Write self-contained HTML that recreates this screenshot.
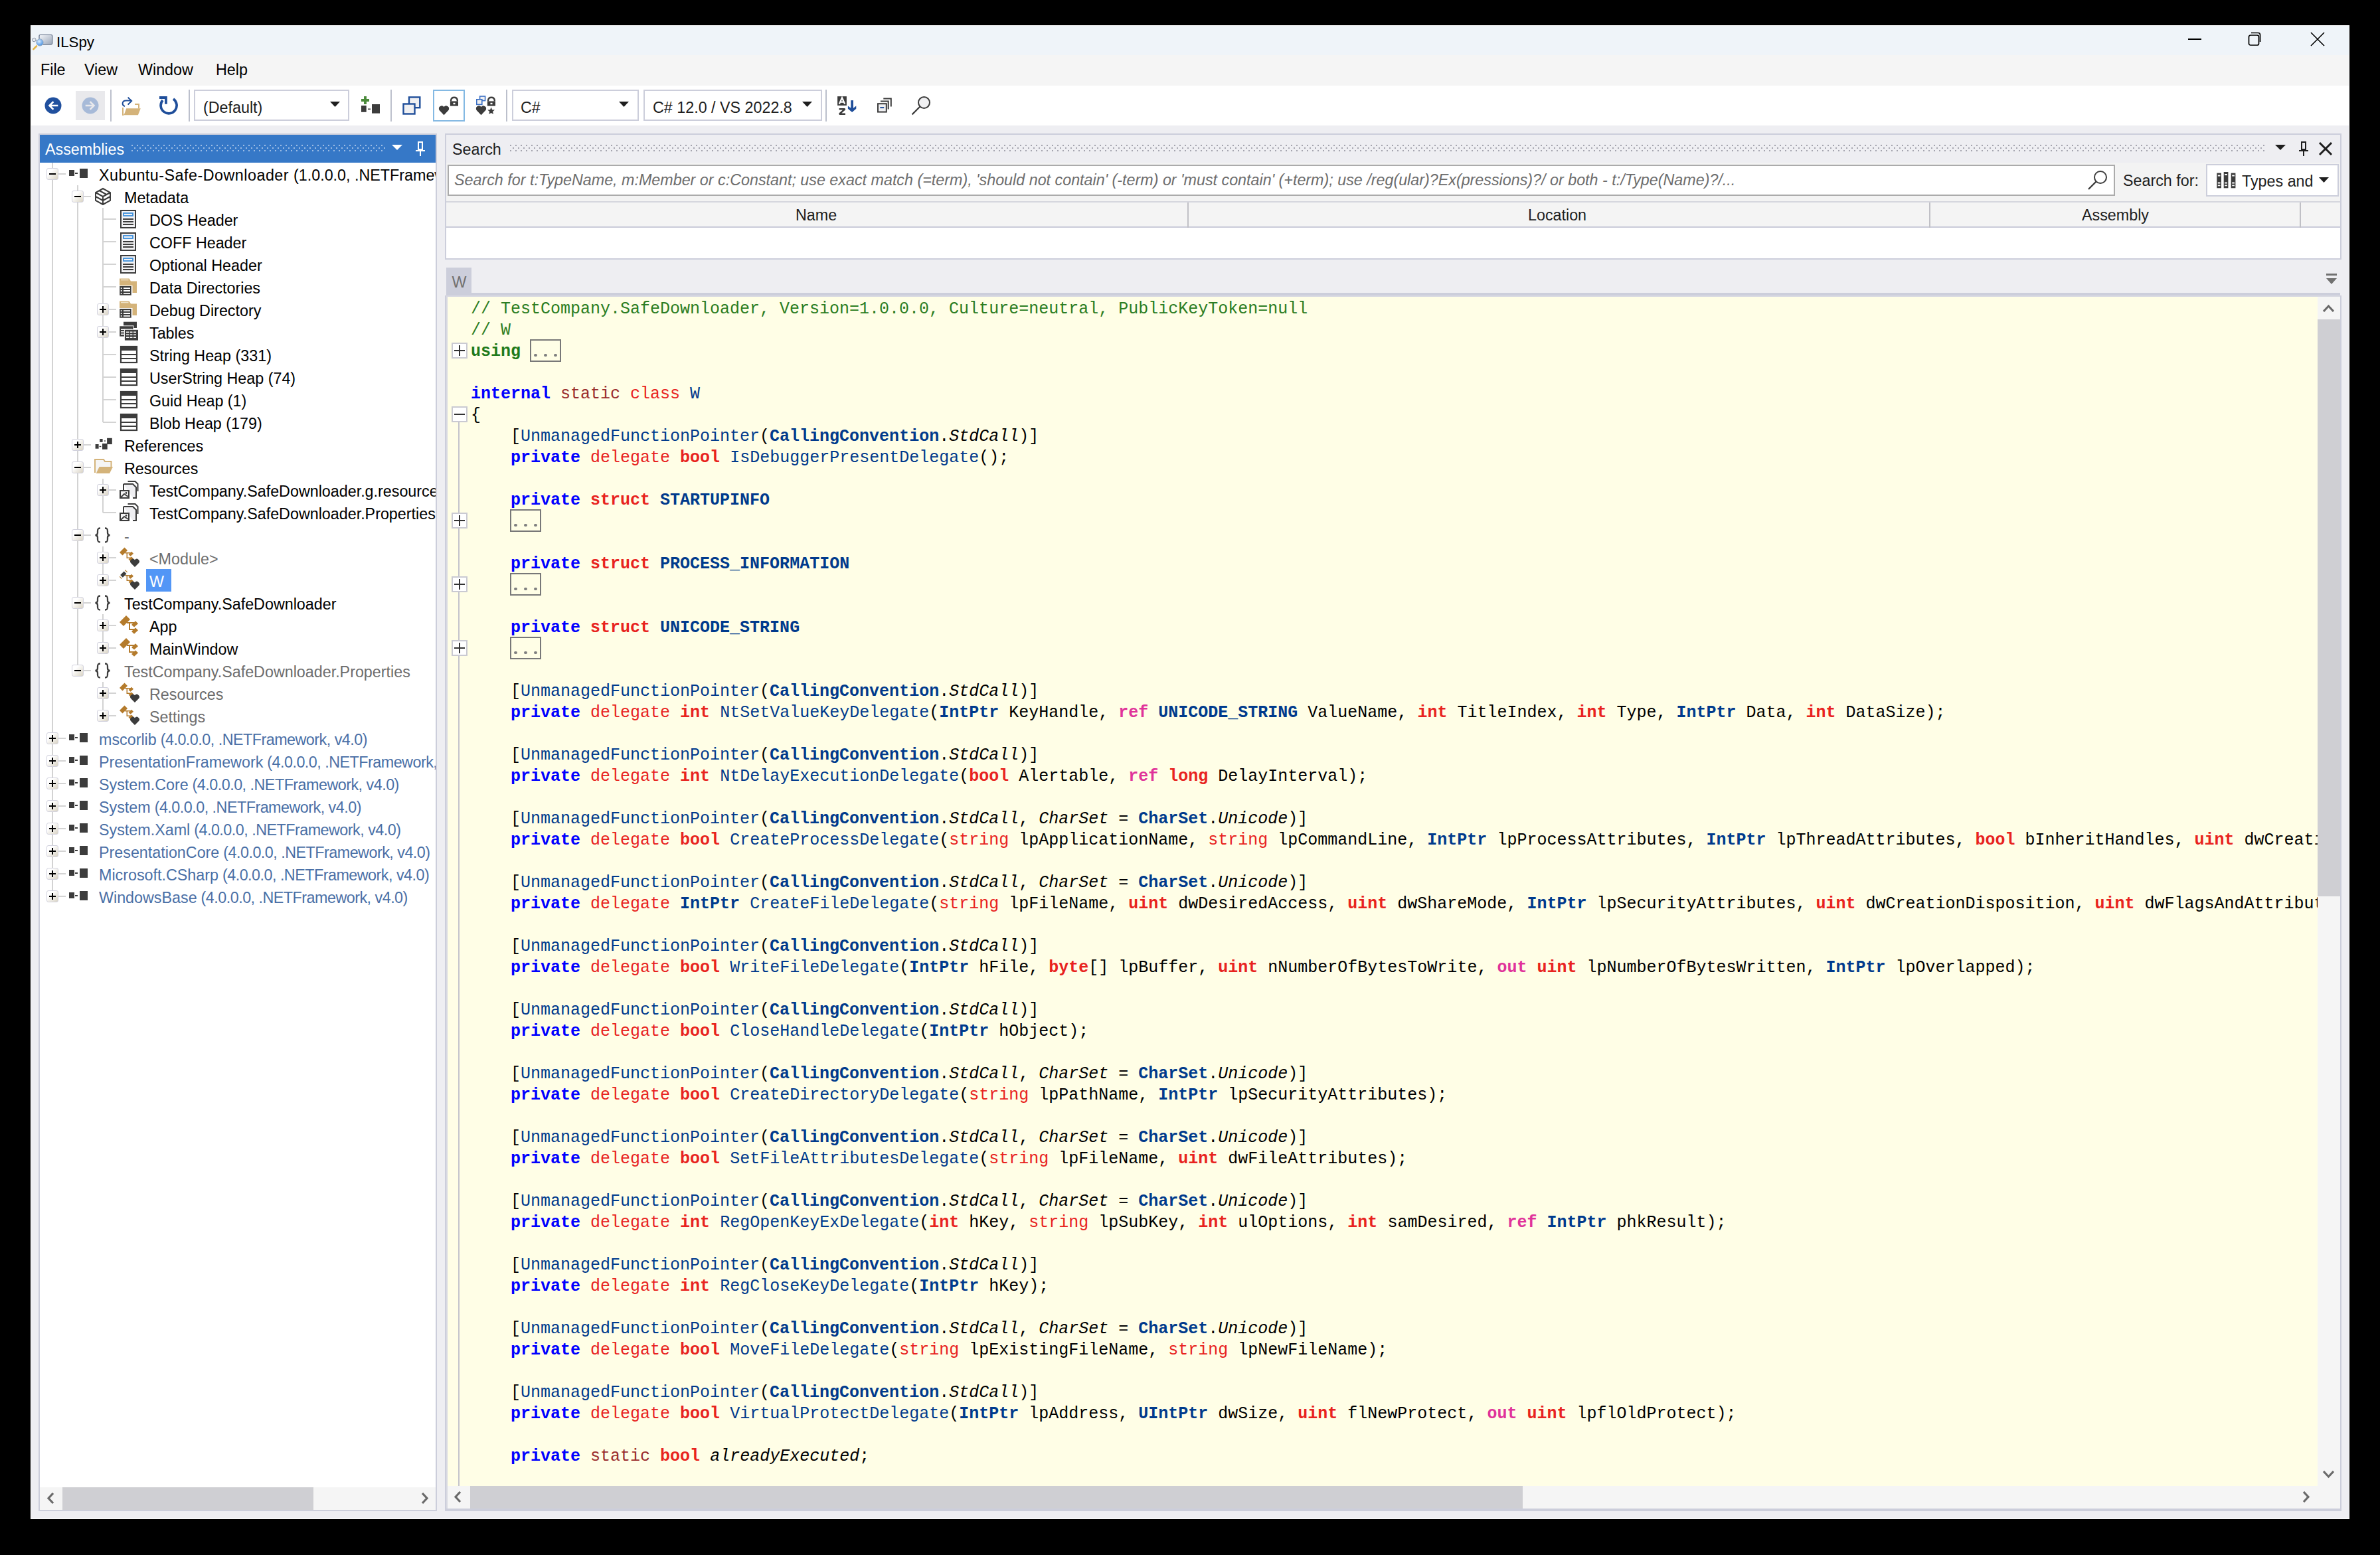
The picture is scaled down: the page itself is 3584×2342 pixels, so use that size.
<!DOCTYPE html><html><head><meta charset="utf-8"><style>
*{margin:0;padding:0;box-sizing:border-box}
html,body{width:3584px;height:2342px;overflow:hidden;background:#000}
.r{position:absolute}
.s{position:absolute;white-space:pre;font-family:"Liberation Sans",sans-serif}
.m{position:absolute;white-space:pre;font-family:"Liberation Mono",monospace}

.cd{position:absolute;left:708px;top:0;font-family:"Liberation Mono",monospace;font-size:25px;line-height:32px;white-space:pre;color:#000}
.c{color:#2B7D22}.ug{color:#1F7A1A;font-weight:bold}.ka{color:#0000FF;font-weight:bold}.mo{color:#9A2C2C}
.kt{color:#E8231E}.vt{color:#E8231E;font-weight:bold}.pm{color:#E0339A;font-weight:bold}.tr{color:#003A8C}.tv{color:#003A8C;font-weight:bold}.it{font-style:italic}
.el{display:inline-block;position:relative}
</style></head><body><div class="r" style="left:46px;top:38px;width:3492px;height:2250px;background:#EEEEF2;border:1px solid #F8F8FA"></div><div class="r" style="left:46px;top:38px;width:3492px;height:45px;background:#EFF4F9;"></div><div class="r" style="left:46px;top:83px;width:3492px;height:46px;background:#F5F5F5;"></div><div class="r" style="left:46px;top:129px;width:3492px;height:60px;background:#FFFFFF;"></div><svg class="r" style="left:46px;top:48px;" width="36" height="32" viewBox="0 0 36 32"><defs><linearGradient id="scr" x1="0" y1="0" x2="1" y2="1"><stop offset="0" stop-color="#F4F6FA"/><stop offset="1" stop-color="#9AA6B8"/></linearGradient><radialGradient id="mg" cx="0.4" cy="0.35" r="0.7"><stop offset="0" stop-color="#D8ECFF"/><stop offset="1" stop-color="#3D8AE0"/></radialGradient></defs><rect x="13" y="4.5" width="19.6" height="14.3" rx="1.5" fill="url(#scr)" stroke="#5A6880" stroke-width="1.2"/><circle cx="5.3" cy="12" r="2.8" fill="#E6EAF0" stroke="#8D98A8" stroke-width="1"/><path d="M8 12.5 L11 14" stroke="#8D98A8" stroke-width="1.2"/><circle cx="14" cy="15.9" r="5.2" fill="url(#mg)" stroke="#9AB0C8" stroke-width="1"/><path d="M4.4 26 L9 21.5" stroke="#E3B548" stroke-width="2.6" stroke-linecap="round"/></svg><div class="s" style="left:85px;top:47.77px;font-size:22.3px;line-height:31px;color:#000;">ILSpy</div><div class="r" style="left:3295px;top:58px;width:20px;height:2px;background:#000;"></div><svg class="r" style="left:3384px;top:47px;" width="26" height="26" viewBox="0 0 26 26"><rect x="2.5" y="6" width="15" height="15" rx="2.5" fill="none" stroke="#000" stroke-width="1.7"/><path d="M6 2.5 h10.5 a3 3 0 0 1 3 3 v10.5" fill="none" stroke="#000" stroke-width="1.7"/></svg><svg class="r" style="left:3477px;top:46px;" width="26" height="26" viewBox="0 0 26 26"><path d="M3 3 L23 23 M23 3 L3 23" stroke="#000" stroke-width="1.6"/></svg><div class="s" style="left:61px;top:89.42px;font-size:23.3px;line-height:33px;color:#000;">File</div><div class="s" style="left:127px;top:89.42px;font-size:23.3px;line-height:33px;color:#000;">View</div><div class="s" style="left:208px;top:89.42px;font-size:23.3px;line-height:33px;color:#000;">Window</div><div class="s" style="left:325px;top:89.42px;font-size:23.3px;line-height:33px;color:#000;">Help</div><div class="r" style="left:166px;top:135px;width:2px;height:48px;background:#BCC0CC;"></div><div class="r" style="left:284px;top:135px;width:2px;height:48px;background:#BCC0CC;"></div><div class="r" style="left:588px;top:135px;width:2px;height:48px;background:#BCC0CC;"></div><div class="r" style="left:762px;top:135px;width:2px;height:48px;background:#BCC0CC;"></div><div class="r" style="left:1243px;top:135px;width:2px;height:48px;background:#BCC0CC;"></div><svg class="r" style="left:66px;top:145px;" width="28" height="28" viewBox="0 0 28 28"><circle cx="14" cy="14" r="12.5" fill="#20509E"/><path d="M20 14 H9 M13.5 9 L8.5 14 L13.5 19" fill="none" stroke="#fff" stroke-width="2.6" stroke-linecap="square"/></svg><div class="r" style="left:114px;top:137px;width:44px;height:44px;background:#E9E9EC;"></div><svg class="r" style="left:122px;top:145px;" width="28" height="28" viewBox="0 0 28 28"><circle cx="14" cy="14" r="12.5" fill="#A7BAD8"/><path d="M8 14 H19 M14.5 9 L19.5 14 L14.5 19" fill="none" stroke="#E9E9EC" stroke-width="2.6" stroke-linecap="square"/></svg><svg class="r" style="left:182px;top:144px;" width="32" height="30" viewBox="0 0 32 30"><path d="M3 18 V29 h1.5" stroke="#D4B37A" stroke-width="2" fill="none"/><path d="M21 13 h6 v6.5" stroke="#D4B37A" stroke-width="2" fill="none"/><path d="M4.6 29.2 L8.3 19.3 H29.8 L25.9 29.2z" fill="#D4B37A"/><path d="M6 16.2 C1 14 1.5 7.6 8 7.6 H16" stroke="#1F4E9A" stroke-width="2" fill="none"/><path d="M10.6 2.6 L16.2 8 L10.6 13.6" stroke="#1F4E9A" stroke-width="2" fill="none"/></svg><svg class="r" style="left:238px;top:144px;" width="32" height="30" viewBox="0 0 32 30"><path d="M23 5 A12 12 0 1 1 7 7" fill="none" stroke="#1F4E9A" stroke-width="3.7"/><path d="M2 1 H13.8 V12.7 H10.1 V4.9 H2z" fill="#1F4E9A"/></svg><div class="r" style="left:292px;top:135px;width:234px;height:47px;background:#fff;border:2px solid #CCCEDB"></div><div class="s" style="left:306px;top:145.92px;font-size:23.3px;line-height:33px;color:#1E1E1E;">(Default)</div><svg class="r" style="left:497px;top:152px;" width="16" height="10" viewBox="0 0 16 10"><path d="M0 1 H15 L7.5 9z" fill="#1E1E1E"/></svg><svg class="r" style="left:542px;top:144px;" width="32" height="30" viewBox="0 0 32 30"><path d="M8 1 V13 M2 7 H14" stroke="#4A8A3A" stroke-width="3.9"/><rect x="2" y="15" width="7.7" height="9.8" fill="#3C3C3C"/><rect x="12" y="19.5" width="4" height="1.6" fill="#3C3C3C"/><rect x="18" y="13" width="12" height="13.7" fill="#3C3C3C"/></svg><svg class="r" style="left:604px;top:144px;" width="32" height="30" viewBox="0 0 32 30"><rect x="12" y="2.4" width="16.3" height="15.8" fill="#F0F0F2" stroke="#1F4E9A" stroke-width="2.4"/><rect x="3.5" y="12.5" width="17" height="15" fill="#F0F0F2" stroke="#1F4E9A" stroke-width="2.4"/></svg><div class="r" style="left:652px;top:135px;width:48px;height:48px;background:#fff;border:2px solid #84B9E3"></div><svg class="r" style="left:658px;top:142px;" width="36" height="34" viewBox="0 0 36 34"><path d="M10.5 31.2 L3.6 24 A4.1 4.1 0 0 1 10.5 19.2 A4.1 4.1 0 0 1 17.4 24z" fill="#3C3C3C"/><path d="M3.2 22.5 A4 4 0 0 1 10.5 19.5 A4 4 0 0 1 17.8 22.5 L10.5 31z" fill="#3C3C3C"/><rect x="19.9" y="10.4" width="12.1" height="7.2" fill="#3C3C3C"/><path d="M21.1 10.4 V9 A4.9 4.9 0 0 1 30.8 9 V10.4" fill="none" stroke="#3C3C3C" stroke-width="2.4"/><rect x="24.5" y="12.8" width="3" height="2.4" fill="#fff"/></svg><svg class="r" style="left:714px;top:142px;" width="36" height="34" viewBox="0 0 36 34"><rect x="8.6" y="3" width="8" height="6.6" fill="#F0F0F2" stroke="#3A6FC4" stroke-width="1.6"/><rect x="3.8" y="7.8" width="8" height="7.6" fill="#F0F0F2" stroke="#3A6FC4" stroke-width="1.6"/><path d="M10.5 31.2 L3.6 24 A4.1 4.1 0 0 1 10.5 19.2 A4.1 4.1 0 0 1 17.4 24z" fill="#3C3C3C"/><path d="M3.2 22.5 A4 4 0 0 1 10.5 19.5 A4 4 0 0 1 17.8 22.5 L10.5 31z" fill="#3C3C3C"/><rect x="19.9" y="10.4" width="12.1" height="7.2" fill="#3C3C3C"/><path d="M21.1 10.4 V9 A4.9 4.9 0 0 1 30.8 9 V10.4" fill="none" stroke="#3C3C3C" stroke-width="2.4"/><rect x="24.5" y="12.8" width="3" height="2.4" fill="#fff"/><path d="M25.6 19.6 l1.5 3.7 3.9 .3 -3 2.5 1 3.9 -3.4 -2.1 -3.4 2.1 1 -3.9 -3 -2.5 3.9 -.3z" fill="#3C3C3C"/></svg><div class="r" style="left:771px;top:135px;width:191px;height:47px;background:#fff;border:2px solid #CCCEDB"></div><div class="s" style="left:784px;top:145.92px;font-size:23.3px;line-height:33px;color:#1E1E1E;">C#</div><svg class="r" style="left:932px;top:152px;" width="16" height="10" viewBox="0 0 16 10"><path d="M0 1 H15 L7.5 9z" fill="#1E1E1E"/></svg><div class="r" style="left:969px;top:135px;width:269px;height:47px;background:#fff;border:2px solid #CCCEDB"></div><div class="s" style="left:983px;top:145.92px;font-size:23.3px;line-height:33px;color:#1E1E1E;">C# 12.0 / VS 2022.8</div><svg class="r" style="left:1208px;top:152px;" width="16" height="10" viewBox="0 0 16 10"><path d="M0 1 H15 L7.5 9z" fill="#1E1E1E"/></svg><svg class="r" style="left:1258px;top:143px;" width="36" height="32" viewBox="0 0 36 32"><rect x="3.1" y="2.1" width="13.8" height="13.8" fill="#3C3C3C"/><path d="M5.8 13.6 L10 4.3 L14.2 13.6 M7.4 10.6 H12.6" fill="none" stroke="#fff" stroke-width="2.3"/><path d="M5.6 21.2 H14.4 L6 28.8 H15" fill="none" stroke="#3C3C3C" stroke-width="2.6" stroke-linejoin="bevel"/><rect x="23.3" y="8.1" width="3.7" height="11" fill="#1F4E9A"/><path d="M18.9 16.6 L25.15 21.3 L31.3 16.6 V20.8 L25.15 26.1 L18.9 20.8z" fill="#1F4E9A"/><path d="M23.3 18 h3.7 v4 h-3.7z" fill="#1F4E9A"/></svg><svg class="r" style="left:1318px;top:143px;" width="28" height="32" viewBox="0 0 28 32"><path d="M12.3 5.4 H23.8 V17.5" fill="none" stroke="#3C3C3C" stroke-width="2"/><path d="M8 9.5 H19.7 V21.6" fill="none" stroke="#3C3C3C" stroke-width="2"/><rect x="4" y="13.2" width="12.8" height="12.4" fill="#F0F0F2" stroke="#3C3C3C" stroke-width="2"/><path d="M7.3 19.1 H13.2" stroke="#1F4E9A" stroke-width="2"/></svg><svg class="r" style="left:1370px;top:143px;" width="34" height="34" viewBox="0 0 34 34"><circle cx="21.5" cy="11.5" r="8.5" fill="#F0F0F2" stroke="#3C3C3C" stroke-width="2"/><path d="M15.2 17.8 L3.6 29.4" stroke="#3C3C3C" stroke-width="2.2"/></svg><div class="r" style="left:58px;top:201px;width:600px;height:2075px;background:#fff;border:2px solid #CCCEDB"></div><div class="r" style="left:60px;top:203px;width:596px;height:42px;background:#3678C7;"></div><div class="s" style="left:68px;top:209.42px;font-size:23.3px;line-height:33px;color:#fff;">Assemblies</div><svg class="r" style="left:198px;top:218px;" width="382" height="10" viewBox="0 0 382 10"><defs><pattern id="g198" width="8" height="8" patternUnits="userSpaceOnUse"><rect x="0" y="0" width="2" height="2" fill="#9DBDE5"/><rect x="4" y="4" width="2" height="2" fill="#9DBDE5"/></pattern></defs><rect width="382" height="10" fill="url(#g198)"/></svg><svg class="r" style="left:590px;top:218px;" width="18" height="10" viewBox="0 0 18 10"><path d="M0 0 H16 L8 8z" fill="#fff"/></svg><svg class="r" style="left:624px;top:212px;" width="18" height="24" viewBox="0 0 18 24"><path d="M5 1 H13 V14 H5z M7 3 V12 H11 V3z" fill="#fff" fill-rule="evenodd"/><rect x="2" y="14" width="14" height="2" fill="#fff"/><rect x="8" y="16" width="2" height="7" fill="#fff"/></svg><div class="r" style="left:60px;top:2240px;width:596px;height:34px;background:#F5F5F5;"></div><div class="r" style="left:94px;top:2240px;width:378px;height:34px;background:#CFCFD3;"></div><svg class="r" style="left:70px;top:2248px;" width="14" height="18" viewBox="0 0 14 18"><path d="M10 1 L3 8.5 L10 16" fill="none" stroke="#6A6A6A" stroke-width="3.2"/></svg><svg class="r" style="left:632px;top:2248px;" width="14" height="18" viewBox="0 0 14 18"><path d="M4 1 L11 8.5 L4 16" fill="none" stroke="#6A6A6A" stroke-width="3.2"/></svg><div class="r" style="left:60px;top:245px;width:596px;height:1995px;overflow:hidden"><div class="r" style="left:18px;top:0px;width:2px;height:1105px;background:#D3D3D3;"></div><div class="r" style="left:56px;top:34px;width:2px;height:731px;background:#D3D3D3;"></div><div class="r" style="left:94px;top:68px;width:2px;height:323px;background:#D3D3D3;"></div><div class="r" style="left:94px;top:476px;width:2px;height:51px;background:#D3D3D3;"></div><div class="r" style="left:94px;top:578px;width:2px;height:51px;background:#D3D3D3;"></div><div class="r" style="left:94px;top:680px;width:2px;height:51px;background:#D3D3D3;"></div><div class="r" style="left:94px;top:782px;width:2px;height:51px;background:#D3D3D3;"></div><div class="r" style="left:19px;top:16px;width:20px;height:2px;background:#D3D3D3;"></div><div class="r" style="left:57px;top:50px;width:20px;height:2px;background:#D3D3D3;"></div><div class="r" style="left:95px;top:84px;width:20px;height:2px;background:#D3D3D3;"></div><div class="r" style="left:95px;top:118px;width:20px;height:2px;background:#D3D3D3;"></div><div class="r" style="left:95px;top:152px;width:20px;height:2px;background:#D3D3D3;"></div><div class="r" style="left:95px;top:186px;width:20px;height:2px;background:#D3D3D3;"></div><div class="r" style="left:95px;top:220px;width:20px;height:2px;background:#D3D3D3;"></div><div class="r" style="left:95px;top:254px;width:20px;height:2px;background:#D3D3D3;"></div><div class="r" style="left:95px;top:288px;width:20px;height:2px;background:#D3D3D3;"></div><div class="r" style="left:95px;top:322px;width:20px;height:2px;background:#D3D3D3;"></div><div class="r" style="left:95px;top:356px;width:20px;height:2px;background:#D3D3D3;"></div><div class="r" style="left:95px;top:390px;width:20px;height:2px;background:#D3D3D3;"></div><div class="r" style="left:57px;top:424px;width:20px;height:2px;background:#D3D3D3;"></div><div class="r" style="left:57px;top:458px;width:20px;height:2px;background:#D3D3D3;"></div><div class="r" style="left:95px;top:492px;width:20px;height:2px;background:#D3D3D3;"></div><div class="r" style="left:95px;top:526px;width:20px;height:2px;background:#D3D3D3;"></div><div class="r" style="left:57px;top:560px;width:20px;height:2px;background:#D3D3D3;"></div><div class="r" style="left:95px;top:594px;width:20px;height:2px;background:#D3D3D3;"></div><div class="r" style="left:95px;top:628px;width:20px;height:2px;background:#D3D3D3;"></div><div class="r" style="left:57px;top:662px;width:20px;height:2px;background:#D3D3D3;"></div><div class="r" style="left:95px;top:696px;width:20px;height:2px;background:#D3D3D3;"></div><div class="r" style="left:95px;top:730px;width:20px;height:2px;background:#D3D3D3;"></div><div class="r" style="left:57px;top:764px;width:20px;height:2px;background:#D3D3D3;"></div><div class="r" style="left:95px;top:798px;width:20px;height:2px;background:#D3D3D3;"></div><div class="r" style="left:95px;top:832px;width:20px;height:2px;background:#D3D3D3;"></div><div class="r" style="left:19px;top:866px;width:20px;height:2px;background:#D3D3D3;"></div><div class="r" style="left:19px;top:900px;width:20px;height:2px;background:#D3D3D3;"></div><div class="r" style="left:19px;top:934px;width:20px;height:2px;background:#D3D3D3;"></div><div class="r" style="left:19px;top:968px;width:20px;height:2px;background:#D3D3D3;"></div><div class="r" style="left:19px;top:1002px;width:20px;height:2px;background:#D3D3D3;"></div><div class="r" style="left:19px;top:1036px;width:20px;height:2px;background:#D3D3D3;"></div><div class="r" style="left:19px;top:1070px;width:20px;height:2px;background:#D3D3D3;"></div><div class="r" style="left:19px;top:1104px;width:20px;height:2px;background:#D3D3D3;"></div><div class="r" style="left:10px;top:8px;width:18px;height:18px;border:1.5px solid #D2D2DE;border-radius:3px;background:linear-gradient(135deg,#FFFFFF 30%,#D9D3C4)"></div><div class="r" style="left:14px;top:16px;width:10px;height:2px;background:#000;"></div><svg class="r" style="left:44px;top:9px;" width="30" height="16" viewBox="0 0 30 16"><rect x="0" y="2" width="8" height="9" fill="#3C3C3C"/><rect x="9" y="6" width="4" height="2" fill="#3C3C3C"/><rect x="16" y="0" width="12" height="14" fill="#3C3C3C"/></svg><div class="s" style="left:89px;top:2.92px;font-size:23.3px;line-height:33px;color:#000;"><span style="letter-spacing:0.5px">Xubuntu-Safe-Downloader </span>(1.0.0.0, .NETFramework, v4.0)</div><div class="r" style="left:48px;top:42px;width:18px;height:18px;border:1.5px solid #D2D2DE;border-radius:3px;background:linear-gradient(135deg,#FFFFFF 30%,#D9D3C4)"></div><div class="r" style="left:52px;top:50px;width:10px;height:2px;background:#000;"></div><svg class="r" style="left:82px;top:37px;" width="26" height="28" viewBox="0 0 26 28"><path d="M13 2 L24 8 V20 L13 26 L2 20 V8z M2 8 L13 14 L24 8 M13 14 V26 M2 14 L13 20 L24 14 M7.5 5 L18.5 11" fill="none" stroke="#3C3C3C" stroke-width="2"/></svg><div class="s" style="left:127px;top:36.92px;font-size:23.3px;line-height:33px;color:#000;">Metadata</div><svg class="r" style="left:120px;top:71px;" width="26" height="28" viewBox="0 0 26 28"><rect x="2" y="1" width="22" height="26" fill="#F3F3F5" stroke="#3C3C3C" stroke-width="2"/><rect x="6" y="5" width="14" height="4" fill="none" stroke="#3B8EDB" stroke-width="1.8"/><path d="M5 14 h16 M5 18 h16 M5 22 h16" stroke="#3C3C3C" stroke-width="1.8"/></svg><div class="s" style="left:165px;top:70.92px;font-size:23.3px;line-height:33px;color:#000;">DOS Header</div><svg class="r" style="left:120px;top:105px;" width="26" height="28" viewBox="0 0 26 28"><rect x="2" y="1" width="22" height="26" fill="#F3F3F5" stroke="#3C3C3C" stroke-width="2"/><rect x="6" y="5" width="14" height="4" fill="none" stroke="#3B8EDB" stroke-width="1.8"/><path d="M5 14 h16 M5 18 h16 M5 22 h16" stroke="#3C3C3C" stroke-width="1.8"/></svg><div class="s" style="left:165px;top:104.92px;font-size:23.3px;line-height:33px;color:#000;">COFF Header</div><svg class="r" style="left:120px;top:139px;" width="26" height="28" viewBox="0 0 26 28"><rect x="2" y="1" width="22" height="26" fill="#F3F3F5" stroke="#3C3C3C" stroke-width="2"/><rect x="6" y="5" width="14" height="4" fill="none" stroke="#3B8EDB" stroke-width="1.8"/><path d="M5 14 h16 M5 18 h16 M5 22 h16" stroke="#3C3C3C" stroke-width="1.8"/></svg><div class="s" style="left:165px;top:138.92px;font-size:23.3px;line-height:33px;color:#000;">Optional Header</div><svg class="r" style="left:120px;top:173px;" width="28" height="28" viewBox="0 0 28 28"><path d="M0 1.6 H14.5 L17 5.5 H26 V23 H0z" fill="#D4B37A"/><path d="M2 3.6 H13.5" stroke="#EFE3CB" stroke-width="1.4"/><rect x="-1" y="12" width="20.5" height="16" fill="#fff"/><rect x="0.2" y="13" width="17.5" height="13.7" fill="#3C3C3C"/><path d="M6 16.1 H16 M6 20 H16 M6 23.8 H16 M1.8 16.1 H3.6 M1.8 20 H3.6 M1.8 23.8 H3.6" stroke="#fff" stroke-width="1.8"/></svg><div class="s" style="left:165px;top:172.92px;font-size:23.3px;line-height:33px;color:#000;">Data Directories</div><div class="r" style="left:86px;top:212px;width:18px;height:18px;border:1.5px solid #D2D2DE;border-radius:3px;background:linear-gradient(135deg,#FFFFFF 30%,#D9D3C4)"></div><div class="r" style="left:90px;top:220px;width:10px;height:2px;background:#000;"></div><div class="r" style="left:94px;top:216px;width:2px;height:10px;background:#000;"></div><svg class="r" style="left:120px;top:207px;" width="28" height="28" viewBox="0 0 28 28"><path d="M0 1.6 H14.5 L17 5.5 H26 V23 H0z" fill="#D4B37A"/><path d="M2 3.6 H13.5" stroke="#EFE3CB" stroke-width="1.4"/><rect x="-1" y="12" width="20.5" height="16" fill="#fff"/><rect x="0.2" y="13" width="17.5" height="13.7" fill="#3C3C3C"/><path d="M6 16.1 H16 M6 20 H16 M6 23.8 H16 M1.8 16.1 H3.6 M1.8 20 H3.6 M1.8 23.8 H3.6" stroke="#fff" stroke-width="1.8"/></svg><div class="s" style="left:165px;top:206.92px;font-size:23.3px;line-height:33px;color:#000;">Debug Directory</div><div class="r" style="left:86px;top:246px;width:18px;height:18px;border:1.5px solid #D2D2DE;border-radius:3px;background:linear-gradient(135deg,#FFFFFF 30%,#D9D3C4)"></div><div class="r" style="left:90px;top:254px;width:10px;height:2px;background:#000;"></div><div class="r" style="left:94px;top:250px;width:2px;height:10px;background:#000;"></div><svg class="r" style="left:120px;top:238px;" width="30" height="34" viewBox="0 0 30 34"><rect x="6" y="1.7" width="20" height="9.3" fill="#3C3C3C"/><rect x="-0.8" y="7.3" width="22.2" height="17.3" fill="#fff"/><rect x="0.2" y="8.3" width="20.2" height="15.3" fill="#3C3C3C"/><path d="M2 13.2 H19 M2 16.8 H19 M2 20.3 H19" stroke="#fff" stroke-width="1.6"/><rect x="6.9" y="12.8" width="22.1" height="17.8" fill="#fff"/><rect x="7.9" y="13.8" width="20.1" height="15.8" fill="#3C3C3C"/><path d="M10 17.2 h4 M15.5 17.2 h4 M21 17.2 h4 M10 21.2 h4 M15.5 21.2 h4 M21 21.2 h4 M10 25.2 h4 M15.5 25.2 h4 M21 25.2 h4" stroke="#fff" stroke-width="1.6"/></svg><div class="s" style="left:165px;top:240.92px;font-size:23.3px;line-height:33px;color:#000;">Tables</div><svg class="r" style="left:120px;top:275px;" width="28" height="28" viewBox="0 0 28 28"><rect x="2" y="2" width="24" height="24" fill="#fff" stroke="#3C3C3C" stroke-width="2.2"/><rect x="2" y="2" width="24" height="6" fill="#3C3C3C"/><path d="M3 14 h22 M3 20 h22" stroke="#3C3C3C" stroke-width="2.2"/></svg><div class="s" style="left:165px;top:274.92px;font-size:23.3px;line-height:33px;color:#000;">String Heap (331)</div><svg class="r" style="left:120px;top:309px;" width="28" height="28" viewBox="0 0 28 28"><rect x="2" y="2" width="24" height="24" fill="#fff" stroke="#3C3C3C" stroke-width="2.2"/><rect x="2" y="2" width="24" height="6" fill="#3C3C3C"/><path d="M3 14 h22 M3 20 h22" stroke="#3C3C3C" stroke-width="2.2"/></svg><div class="s" style="left:165px;top:308.92px;font-size:23.3px;line-height:33px;color:#000;">UserString Heap (74)</div><svg class="r" style="left:120px;top:343px;" width="28" height="28" viewBox="0 0 28 28"><rect x="2" y="2" width="24" height="24" fill="#fff" stroke="#3C3C3C" stroke-width="2.2"/><rect x="2" y="2" width="24" height="6" fill="#3C3C3C"/><path d="M3 14 h22 M3 20 h22" stroke="#3C3C3C" stroke-width="2.2"/></svg><div class="s" style="left:165px;top:342.92px;font-size:23.3px;line-height:33px;color:#000;">Guid Heap (1)</div><svg class="r" style="left:120px;top:377px;" width="28" height="28" viewBox="0 0 28 28"><rect x="2" y="2" width="24" height="24" fill="#fff" stroke="#3C3C3C" stroke-width="2.2"/><rect x="2" y="2" width="24" height="6" fill="#3C3C3C"/><path d="M3 14 h22 M3 20 h22" stroke="#3C3C3C" stroke-width="2.2"/></svg><div class="s" style="left:165px;top:376.92px;font-size:23.3px;line-height:33px;color:#000;">Blob Heap (179)</div><div class="r" style="left:48px;top:416px;width:18px;height:18px;border:1.5px solid #D2D2DE;border-radius:3px;background:linear-gradient(135deg,#FFFFFF 30%,#D9D3C4)"></div><div class="r" style="left:52px;top:424px;width:10px;height:2px;background:#000;"></div><div class="r" style="left:56px;top:420px;width:2px;height:10px;background:#000;"></div><svg class="r" style="left:82px;top:408px;" width="30" height="34" viewBox="0 0 30 34"><rect x="1.6" y="16" width="5" height="6.7" fill="#3C3C3C"/><rect x="7.6" y="18.8" width="2.8" height="1.4" fill="#3C3C3C"/><rect x="12" y="15" width="7.7" height="8.8" fill="#3C3C3C"/><rect x="8.2" y="8" width="4.4" height="4.9" fill="#3C3C3C"/><rect x="14.8" y="10.4" width="2.2" height="1.4" fill="#3C3C3C"/><rect x="19.1" y="6.8" width="7.7" height="9.3" fill="#3C3C3C"/></svg><div class="s" style="left:127px;top:410.92px;font-size:23.3px;line-height:33px;color:#000;">References</div><div class="r" style="left:48px;top:450px;width:18px;height:18px;border:1.5px solid #D2D2DE;border-radius:3px;background:linear-gradient(135deg,#FFFFFF 30%,#D9D3C4)"></div><div class="r" style="left:52px;top:458px;width:10px;height:2px;background:#000;"></div><svg class="r" style="left:82px;top:442px;" width="32" height="34" viewBox="0 0 32 34"><path d="M1 25 V5 H14 L16 8 H25.5 V17" fill="#F5F5F5" stroke="#D4B37A" stroke-width="2"/><path d="M2.7 26 L7.6 16 H28 L23 26z" fill="#D4B37A"/></svg><div class="s" style="left:127px;top:444.92px;font-size:23.3px;line-height:33px;color:#000;">Resources</div><div class="r" style="left:86px;top:484px;width:18px;height:18px;border:1.5px solid #D2D2DE;border-radius:3px;background:linear-gradient(135deg,#FFFFFF 30%,#D9D3C4)"></div><div class="r" style="left:90px;top:492px;width:10px;height:2px;background:#000;"></div><div class="r" style="left:94px;top:488px;width:2px;height:10px;background:#000;"></div><svg class="r" style="left:120px;top:476px;" width="30" height="34" viewBox="0 0 30 34"><path d="M12.5 4 h11 l4 4 v11" fill="none" stroke="#3C3C3C" stroke-width="2"/><path d="M6 8 h14 l5 5 v16 h-5" fill="#EFEFF2" stroke="#3C3C3C" stroke-width="2"/><path d="M6 8 v9" stroke="#3C3C3C" stroke-width="2"/><rect x="1" y="18" width="13" height="11" fill="#F5F5F5" stroke="#3C3C3C" stroke-width="2"/><path d="M2 28 l5 -5 l6 4" fill="none" stroke="#3C3C3C" stroke-width="1.8"/><circle cx="10" cy="21.5" r="1.4" fill="#3C3C3C"/></svg><div class="s" style="left:165px;top:478.92px;font-size:23.3px;line-height:33px;color:#000;">TestCompany.SafeDownloader.g.resources</div><svg class="r" style="left:120px;top:510px;" width="30" height="34" viewBox="0 0 30 34"><path d="M12.5 4 h11 l4 4 v11" fill="none" stroke="#3C3C3C" stroke-width="2"/><path d="M6 8 h14 l5 5 v16 h-5" fill="#EFEFF2" stroke="#3C3C3C" stroke-width="2"/><path d="M6 8 v9" stroke="#3C3C3C" stroke-width="2"/><rect x="1" y="18" width="13" height="11" fill="#F5F5F5" stroke="#3C3C3C" stroke-width="2"/><path d="M2 28 l5 -5 l6 4" fill="none" stroke="#3C3C3C" stroke-width="1.8"/><circle cx="10" cy="21.5" r="1.4" fill="#3C3C3C"/></svg><div class="s" style="left:165px;top:512.92px;font-size:23.3px;line-height:33px;color:#000;">TestCompany.SafeDownloader.Properties.Resources.resources</div><div class="r" style="left:48px;top:552px;width:18px;height:18px;border:1.5px solid #D2D2DE;border-radius:3px;background:linear-gradient(135deg,#FFFFFF 30%,#D9D3C4)"></div><div class="r" style="left:52px;top:560px;width:10px;height:2px;background:#000;"></div><svg class="r" style="left:82px;top:549px;" width="26" height="24" viewBox="0 0 26 24"><path d="M9 1.5 C5.5 1.5 5 3 5 6 V8.5 C5 10.5 4 11.8 1.5 12 C4 12.2 5 13.5 5 15.5 V18 C5 21 5.5 22.5 9 22.5 M16 1.5 C19.5 1.5 20 3 20 6 V8.5 C20 10.5 21 11.8 23.5 12 C21 12.2 20 13.5 20 15.5 V18 C20 21 19.5 22.5 16 22.5" fill="none" stroke="#3C3C3C" stroke-width="2.3"/></svg><div class="s" style="left:127px;top:546.92px;font-size:23.3px;line-height:33px;color:#6D6D6D;">-</div><div class="r" style="left:86px;top:586px;width:18px;height:18px;border:1.5px solid #D2D2DE;border-radius:3px;background:linear-gradient(135deg,#FFFFFF 30%,#D9D3C4)"></div><div class="r" style="left:90px;top:594px;width:10px;height:2px;background:#000;"></div><div class="r" style="left:94px;top:590px;width:2px;height:10px;background:#000;"></div><svg class="r" style="left:120px;top:578px;" width="30" height="34" viewBox="0 0 30 34"><g transform="scale(0.75)"><path d="M0 12 L10 2 L16 8 L6 18z" fill="#B47B2C"/><path d="M11 13 H23 M15 13 V23 H23" fill="none" stroke="#B47B2C" stroke-width="2"/><path d="M18 16 L24 10.3 L28 14.2 L22 19.6z" fill="#B47B2C"/><path d="M18 26 L24 20.5 L28 24.2 L22 29.8z" fill="#B47B2C"/></g><path d="M23 31 L17 25 A3.6 3.6 0 0 1 23 20.3 A3.6 3.6 0 0 1 29 25z" fill="#3C3C3C"/></svg><div class="s" style="left:165px;top:580.92px;font-size:23.3px;line-height:33px;color:#6D6D6D;">&lt;Module&gt;</div><div class="r" style="left:86px;top:620px;width:18px;height:18px;border:1.5px solid #D2D2DE;border-radius:3px;background:linear-gradient(135deg,#FFFFFF 30%,#D9D3C4)"></div><div class="r" style="left:90px;top:628px;width:10px;height:2px;background:#000;"></div><div class="r" style="left:94px;top:624px;width:2px;height:10px;background:#000;"></div><svg class="r" style="left:120px;top:612px;" width="30" height="34" viewBox="0 0 30 34"><g transform="scale(0.75)"><path d="M1.5 12 L9 4.5 L14 9.5 L6.5 17z" fill="#3C3C3C"/><path d="M0 15 L4.5 19.5 M11 2 L15.5 6.5" stroke="#B47B2C" stroke-width="1.6" fill="none"/><path d="M11 13 H23 M15 13 V23 H23" fill="none" stroke="#B47B2C" stroke-width="2"/><path d="M18 16 L24 10.3 L28 14.2 L22 19.6z" fill="#B47B2C"/><path d="M18 26 L24 20.5 L28 24.2 L22 29.8z" fill="#B47B2C"/></g><path d="M23 31 L17 25 A3.6 3.6 0 0 1 23 20.3 A3.6 3.6 0 0 1 29 25z" fill="#3C3C3C"/></svg><div class="r" style="left:160px;top:612px;width:38px;height:34px;background:#5296F6;"></div><div class="s" style="left:165px;top:614.92px;font-size:23.3px;line-height:33px;color:#fff;">W</div><div class="r" style="left:48px;top:654px;width:18px;height:18px;border:1.5px solid #D2D2DE;border-radius:3px;background:linear-gradient(135deg,#FFFFFF 30%,#D9D3C4)"></div><div class="r" style="left:52px;top:662px;width:10px;height:2px;background:#000;"></div><svg class="r" style="left:82px;top:651px;" width="26" height="24" viewBox="0 0 26 24"><path d="M9 1.5 C5.5 1.5 5 3 5 6 V8.5 C5 10.5 4 11.8 1.5 12 C4 12.2 5 13.5 5 15.5 V18 C5 21 5.5 22.5 9 22.5 M16 1.5 C19.5 1.5 20 3 20 6 V8.5 C20 10.5 21 11.8 23.5 12 C21 12.2 20 13.5 20 15.5 V18 C20 21 19.5 22.5 16 22.5" fill="none" stroke="#3C3C3C" stroke-width="2.3"/></svg><div class="s" style="left:127px;top:648.92px;font-size:23.3px;line-height:33px;color:#000;">TestCompany.SafeDownloader</div><div class="r" style="left:86px;top:688px;width:18px;height:18px;border:1.5px solid #D2D2DE;border-radius:3px;background:linear-gradient(135deg,#FFFFFF 30%,#D9D3C4)"></div><div class="r" style="left:90px;top:696px;width:10px;height:2px;background:#000;"></div><div class="r" style="left:94px;top:692px;width:2px;height:10px;background:#000;"></div><svg class="r" style="left:120px;top:680px;" width="30" height="34" viewBox="0 0 30 34"><path d="M0 12 L10 2 L16 8 L6 18z" fill="#B47B2C"/><path d="M11 13 H23 M15 13 V23 H23" fill="none" stroke="#B47B2C" stroke-width="2"/><path d="M18 16 L24 10.3 L28 14.2 L22 19.6z" fill="#B47B2C"/><path d="M18 26 L24 20.5 L28 24.2 L22 29.8z" fill="#B47B2C"/></svg><div class="s" style="left:165px;top:682.92px;font-size:23.3px;line-height:33px;color:#000;">App</div><div class="r" style="left:86px;top:722px;width:18px;height:18px;border:1.5px solid #D2D2DE;border-radius:3px;background:linear-gradient(135deg,#FFFFFF 30%,#D9D3C4)"></div><div class="r" style="left:90px;top:730px;width:10px;height:2px;background:#000;"></div><div class="r" style="left:94px;top:726px;width:2px;height:10px;background:#000;"></div><svg class="r" style="left:120px;top:714px;" width="30" height="34" viewBox="0 0 30 34"><path d="M0 12 L10 2 L16 8 L6 18z" fill="#B47B2C"/><path d="M11 13 H23 M15 13 V23 H23" fill="none" stroke="#B47B2C" stroke-width="2"/><path d="M18 16 L24 10.3 L28 14.2 L22 19.6z" fill="#B47B2C"/><path d="M18 26 L24 20.5 L28 24.2 L22 29.8z" fill="#B47B2C"/></svg><div class="s" style="left:165px;top:716.92px;font-size:23.3px;line-height:33px;color:#000;">MainWindow</div><div class="r" style="left:48px;top:756px;width:18px;height:18px;border:1.5px solid #D2D2DE;border-radius:3px;background:linear-gradient(135deg,#FFFFFF 30%,#D9D3C4)"></div><div class="r" style="left:52px;top:764px;width:10px;height:2px;background:#000;"></div><svg class="r" style="left:82px;top:753px;" width="26" height="24" viewBox="0 0 26 24"><path d="M9 1.5 C5.5 1.5 5 3 5 6 V8.5 C5 10.5 4 11.8 1.5 12 C4 12.2 5 13.5 5 15.5 V18 C5 21 5.5 22.5 9 22.5 M16 1.5 C19.5 1.5 20 3 20 6 V8.5 C20 10.5 21 11.8 23.5 12 C21 12.2 20 13.5 20 15.5 V18 C20 21 19.5 22.5 16 22.5" fill="none" stroke="#3C3C3C" stroke-width="2.3"/></svg><div class="s" style="left:127px;top:750.92px;font-size:23.3px;line-height:33px;color:#6D6D6D;">TestCompany.SafeDownloader.Properties</div><div class="r" style="left:86px;top:790px;width:18px;height:18px;border:1.5px solid #D2D2DE;border-radius:3px;background:linear-gradient(135deg,#FFFFFF 30%,#D9D3C4)"></div><div class="r" style="left:90px;top:798px;width:10px;height:2px;background:#000;"></div><div class="r" style="left:94px;top:794px;width:2px;height:10px;background:#000;"></div><svg class="r" style="left:120px;top:782px;" width="30" height="34" viewBox="0 0 30 34"><g transform="scale(0.75)"><path d="M0 12 L10 2 L16 8 L6 18z" fill="#B47B2C"/><path d="M11 13 H23 M15 13 V23 H23" fill="none" stroke="#B47B2C" stroke-width="2"/><path d="M18 16 L24 10.3 L28 14.2 L22 19.6z" fill="#B47B2C"/><path d="M18 26 L24 20.5 L28 24.2 L22 29.8z" fill="#B47B2C"/></g><path d="M23 31 L17 25 A3.6 3.6 0 0 1 23 20.3 A3.6 3.6 0 0 1 29 25z" fill="#3C3C3C"/></svg><div class="s" style="left:165px;top:784.92px;font-size:23.3px;line-height:33px;color:#6D6D6D;">Resources</div><div class="r" style="left:86px;top:824px;width:18px;height:18px;border:1.5px solid #D2D2DE;border-radius:3px;background:linear-gradient(135deg,#FFFFFF 30%,#D9D3C4)"></div><div class="r" style="left:90px;top:832px;width:10px;height:2px;background:#000;"></div><div class="r" style="left:94px;top:828px;width:2px;height:10px;background:#000;"></div><svg class="r" style="left:120px;top:816px;" width="30" height="34" viewBox="0 0 30 34"><g transform="scale(0.75)"><path d="M0 12 L10 2 L16 8 L6 18z" fill="#B47B2C"/><path d="M11 13 H23 M15 13 V23 H23" fill="none" stroke="#B47B2C" stroke-width="2"/><path d="M18 16 L24 10.3 L28 14.2 L22 19.6z" fill="#B47B2C"/><path d="M18 26 L24 20.5 L28 24.2 L22 29.8z" fill="#B47B2C"/></g><path d="M23 31 L17 25 A3.6 3.6 0 0 1 23 20.3 A3.6 3.6 0 0 1 29 25z" fill="#3C3C3C"/></svg><div class="s" style="left:165px;top:818.92px;font-size:23.3px;line-height:33px;color:#6D6D6D;">Settings</div><div class="r" style="left:10px;top:858px;width:18px;height:18px;border:1.5px solid #D2D2DE;border-radius:3px;background:linear-gradient(135deg,#FFFFFF 30%,#D9D3C4)"></div><div class="r" style="left:14px;top:866px;width:10px;height:2px;background:#000;"></div><div class="r" style="left:18px;top:862px;width:2px;height:10px;background:#000;"></div><svg class="r" style="left:44px;top:859px;" width="30" height="16" viewBox="0 0 30 16"><rect x="0" y="2" width="8" height="9" fill="#3C3C3C"/><rect x="9" y="6" width="4" height="2" fill="#3C3C3C"/><rect x="16" y="0" width="12" height="14" fill="#3C3C3C"/></svg><div class="s" style="left:89px;top:852.92px;font-size:23.3px;line-height:33px;color:#4A6FA6;">mscorlib<span style="letter-spacing:-0.5px"> (4.0.0.0, .NETFramework, v4.0)</span></div><div class="r" style="left:10px;top:892px;width:18px;height:18px;border:1.5px solid #D2D2DE;border-radius:3px;background:linear-gradient(135deg,#FFFFFF 30%,#D9D3C4)"></div><div class="r" style="left:14px;top:900px;width:10px;height:2px;background:#000;"></div><div class="r" style="left:18px;top:896px;width:2px;height:10px;background:#000;"></div><svg class="r" style="left:44px;top:893px;" width="30" height="16" viewBox="0 0 30 16"><rect x="0" y="2" width="8" height="9" fill="#3C3C3C"/><rect x="9" y="6" width="4" height="2" fill="#3C3C3C"/><rect x="16" y="0" width="12" height="14" fill="#3C3C3C"/></svg><div class="s" style="left:89px;top:886.92px;font-size:23.3px;line-height:33px;color:#4A6FA6;">PresentationFramework<span style="letter-spacing:-0.5px"> (4.0.0.0, .NETFramework, v4.0)</span></div><div class="r" style="left:10px;top:926px;width:18px;height:18px;border:1.5px solid #D2D2DE;border-radius:3px;background:linear-gradient(135deg,#FFFFFF 30%,#D9D3C4)"></div><div class="r" style="left:14px;top:934px;width:10px;height:2px;background:#000;"></div><div class="r" style="left:18px;top:930px;width:2px;height:10px;background:#000;"></div><svg class="r" style="left:44px;top:927px;" width="30" height="16" viewBox="0 0 30 16"><rect x="0" y="2" width="8" height="9" fill="#3C3C3C"/><rect x="9" y="6" width="4" height="2" fill="#3C3C3C"/><rect x="16" y="0" width="12" height="14" fill="#3C3C3C"/></svg><div class="s" style="left:89px;top:920.92px;font-size:23.3px;line-height:33px;color:#4A6FA6;">System.Core<span style="letter-spacing:-0.5px"> (4.0.0.0, .NETFramework, v4.0)</span></div><div class="r" style="left:10px;top:960px;width:18px;height:18px;border:1.5px solid #D2D2DE;border-radius:3px;background:linear-gradient(135deg,#FFFFFF 30%,#D9D3C4)"></div><div class="r" style="left:14px;top:968px;width:10px;height:2px;background:#000;"></div><div class="r" style="left:18px;top:964px;width:2px;height:10px;background:#000;"></div><svg class="r" style="left:44px;top:961px;" width="30" height="16" viewBox="0 0 30 16"><rect x="0" y="2" width="8" height="9" fill="#3C3C3C"/><rect x="9" y="6" width="4" height="2" fill="#3C3C3C"/><rect x="16" y="0" width="12" height="14" fill="#3C3C3C"/></svg><div class="s" style="left:89px;top:954.92px;font-size:23.3px;line-height:33px;color:#4A6FA6;">System<span style="letter-spacing:-0.5px"> (4.0.0.0, .NETFramework, v4.0)</span></div><div class="r" style="left:10px;top:994px;width:18px;height:18px;border:1.5px solid #D2D2DE;border-radius:3px;background:linear-gradient(135deg,#FFFFFF 30%,#D9D3C4)"></div><div class="r" style="left:14px;top:1002px;width:10px;height:2px;background:#000;"></div><div class="r" style="left:18px;top:998px;width:2px;height:10px;background:#000;"></div><svg class="r" style="left:44px;top:995px;" width="30" height="16" viewBox="0 0 30 16"><rect x="0" y="2" width="8" height="9" fill="#3C3C3C"/><rect x="9" y="6" width="4" height="2" fill="#3C3C3C"/><rect x="16" y="0" width="12" height="14" fill="#3C3C3C"/></svg><div class="s" style="left:89px;top:988.92px;font-size:23.3px;line-height:33px;color:#4A6FA6;">System.Xaml<span style="letter-spacing:-0.5px"> (4.0.0.0, .NETFramework, v4.0)</span></div><div class="r" style="left:10px;top:1028px;width:18px;height:18px;border:1.5px solid #D2D2DE;border-radius:3px;background:linear-gradient(135deg,#FFFFFF 30%,#D9D3C4)"></div><div class="r" style="left:14px;top:1036px;width:10px;height:2px;background:#000;"></div><div class="r" style="left:18px;top:1032px;width:2px;height:10px;background:#000;"></div><svg class="r" style="left:44px;top:1029px;" width="30" height="16" viewBox="0 0 30 16"><rect x="0" y="2" width="8" height="9" fill="#3C3C3C"/><rect x="9" y="6" width="4" height="2" fill="#3C3C3C"/><rect x="16" y="0" width="12" height="14" fill="#3C3C3C"/></svg><div class="s" style="left:89px;top:1022.92px;font-size:23.3px;line-height:33px;color:#4A6FA6;">PresentationCore<span style="letter-spacing:-0.5px"> (4.0.0.0, .NETFramework, v4.0)</span></div><div class="r" style="left:10px;top:1062px;width:18px;height:18px;border:1.5px solid #D2D2DE;border-radius:3px;background:linear-gradient(135deg,#FFFFFF 30%,#D9D3C4)"></div><div class="r" style="left:14px;top:1070px;width:10px;height:2px;background:#000;"></div><div class="r" style="left:18px;top:1066px;width:2px;height:10px;background:#000;"></div><svg class="r" style="left:44px;top:1063px;" width="30" height="16" viewBox="0 0 30 16"><rect x="0" y="2" width="8" height="9" fill="#3C3C3C"/><rect x="9" y="6" width="4" height="2" fill="#3C3C3C"/><rect x="16" y="0" width="12" height="14" fill="#3C3C3C"/></svg><div class="s" style="left:89px;top:1056.92px;font-size:23.3px;line-height:33px;color:#4A6FA6;">Microsoft.CSharp<span style="letter-spacing:-0.5px"> (4.0.0.0, .NETFramework, v4.0)</span></div><div class="r" style="left:10px;top:1096px;width:18px;height:18px;border:1.5px solid #D2D2DE;border-radius:3px;background:linear-gradient(135deg,#FFFFFF 30%,#D9D3C4)"></div><div class="r" style="left:14px;top:1104px;width:10px;height:2px;background:#000;"></div><div class="r" style="left:18px;top:1100px;width:2px;height:10px;background:#000;"></div><svg class="r" style="left:44px;top:1097px;" width="30" height="16" viewBox="0 0 30 16"><rect x="0" y="2" width="8" height="9" fill="#3C3C3C"/><rect x="9" y="6" width="4" height="2" fill="#3C3C3C"/><rect x="16" y="0" width="12" height="14" fill="#3C3C3C"/></svg><div class="s" style="left:89px;top:1090.92px;font-size:23.3px;line-height:33px;color:#4A6FA6;">WindowsBase<span style="letter-spacing:-0.5px"> (4.0.0.0, .NETFramework, v4.0)</span></div></div><div class="r" style="left:670px;top:201px;width:2856px;height:190px;background:#EEEEF2;border:2px solid #CCCEDB"></div><div class="s" style="left:681px;top:209.42px;font-size:23.3px;line-height:33px;color:#1E1E1E;">Search</div><svg class="r" style="left:768px;top:218px;" width="2642" height="10" viewBox="0 0 2642 10"><defs><pattern id="g768" width="8" height="8" patternUnits="userSpaceOnUse"><rect x="0" y="0" width="2" height="2" fill="#A4A4AE"/><rect x="4" y="4" width="2" height="2" fill="#A4A4AE"/></pattern></defs><rect width="2642" height="10" fill="url(#g768)"/></svg><svg class="r" style="left:3426px;top:218px;" width="18" height="10" viewBox="0 0 18 10"><path d="M0 0 H16 L8 8z" fill="#1E1E1E"/></svg><svg class="r" style="left:3460px;top:212px;" width="18" height="24" viewBox="0 0 18 24"><path d="M5 1 H13 V14 H5z M7 3 V12 H11 V3z" fill="#1E1E1E" fill-rule="evenodd"/><rect x="2" y="14" width="14" height="2" fill="#1E1E1E"/><rect x="8" y="16" width="2" height="7" fill="#1E1E1E"/></svg><svg class="r" style="left:3490px;top:213px;" width="24" height="22" viewBox="0 0 24 22"><path d="M3 2 L21 20 M21 2 L3 20" stroke="#1E1E1E" stroke-width="3"/></svg><div class="r" style="left:672px;top:245px;width:2852px;height:59px;background:#F3F3F3;"></div><div class="r" style="left:674px;top:248px;width:2511px;height:47px;background:#fff;border:2px solid #ABABAB"></div><div class="s" style="left:684px;top:255.42px;font-size:23.3px;line-height:33px;color:#6D6D6D;font-style:italic">Search for t:TypeName, m:Member or c:Constant; use exact match (=term), 'should not contain' (-term) or 'must contain' (+term); use /reg(ular)?Ex(pressions)?/ or both - t:/Type(Name)?/...</div><svg class="r" style="left:3142px;top:255px;" width="34" height="34" viewBox="0 0 34 34"><circle cx="21" cy="12" r="9" fill="none" stroke="#3C3C3C" stroke-width="2"/><path d="M14.5 18.5 L3 30" stroke="#3C3C3C" stroke-width="2.4"/></svg><div class="s" style="left:3197px;top:255.92px;font-size:23.3px;line-height:33px;color:#1E1E1E;">Search for:</div><div class="r" style="left:3322px;top:247px;width:200px;height:49px;background:#fff;border:2px solid #CCCEDB"></div><svg class="r" style="left:3336px;top:256px;" width="32" height="30" viewBox="0 0 32 30"><rect x="2.3" y="4.6" width="6.7" height="22.7" fill="#3C3C3C"/><rect x="12.7" y="3" width="6.7" height="24.3" fill="#3C3C3C"/><rect x="23.7" y="4.6" width="6.7" height="22.7" fill="#3C3C3C"/><path d="M3.8 8.5 h3.7 M14.2 7 h3.7 M25.2 8.5 h3.7 M3.8 19.5 h3.7 M14.2 19.5 h3.7 M25.2 19.5 h3.7 M3.8 23.3 h3.7 M14.2 23.3 h3.7 M25.2 23.3 h3.7" stroke="#fff" stroke-width="1.8"/></svg><div class="s" style="left:3376px;top:257.42px;font-size:23.3px;line-height:33px;color:#1E1E1E;">Types and</div><svg class="r" style="left:3492px;top:267px;" width="18" height="10" viewBox="0 0 18 10"><path d="M0 0 H15 L7.5 8z" fill="#1E1E1E"/></svg><div class="r" style="left:672px;top:303px;width:2852px;height:40px;background:#F4F4F4;border-top:2px solid #D5D6DE;border-bottom:2px solid #C9CBD9"></div><div class="r" style="left:1788px;top:305px;width:2px;height:38px;background:#C0C0C6;"></div><div class="r" style="left:2905px;top:305px;width:2px;height:38px;background:#C0C0C6;"></div><div class="r" style="left:3463px;top:305px;width:2px;height:38px;background:#C0C0C6;"></div><div class="s" style="left:1198px;top:307.92px;font-size:23.3px;line-height:33px;color:#1E1E1E;">Name</div><div class="s" style="left:2301px;top:307.92px;font-size:23.3px;line-height:33px;color:#1E1E1E;">Location</div><div class="s" style="left:3135px;top:307.92px;font-size:23.3px;line-height:33px;color:#1E1E1E;">Assembly</div><div class="r" style="left:672px;top:343px;width:2852px;height:46px;background:#fff;"></div><div class="r" style="left:672px;top:403px;width:38px;height:41px;background:#CCCEDB;"></div><div class="s" style="left:680.5px;top:409.42px;font-size:23.3px;line-height:33px;color:#717171;">W</div><div class="r" style="left:672px;top:441px;width:2852px;height:4px;background:#CCCEDB;"></div><svg class="r" style="left:3501px;top:410px;" width="22" height="22" viewBox="0 0 22 22"><rect x="2" y="2" width="16" height="3" fill="#717171"/><path d="M2 9 H18 L10 18z" fill="#717171"/></svg><div class="r" style="left:670px;top:445px;width:2856px;height:1831px;background:#CCCEDB;"></div><div class="r" style="left:672px;top:445px;width:2852px;height:2px;background:#D8D9E2;"></div><div class="r" style="left:672px;top:445px;width:2px;height:1827px;background:#D8D9E2;"></div><div class="r" style="left:674px;top:447px;width:2850px;height:1825px;background:#FFFEE6;"></div><div class="r" style="left:3490px;top:447px;width:34px;height:1791px;background:#F5F5F5;"></div><div class="r" style="left:3490px;top:481px;width:34px;height:869px;background:#CFCFD3;"></div><svg class="r" style="left:3497px;top:456px;" width="20" height="16" viewBox="0 0 20 16"><path d="M2 13 L9.5 5 L17 13" fill="none" stroke="#6A6A6A" stroke-width="3.2"/></svg><svg class="r" style="left:3497px;top:2213px;" width="20" height="16" viewBox="0 0 20 16"><path d="M2 3 L9.5 11 L17 3" fill="none" stroke="#6A6A6A" stroke-width="3.2"/></svg><div class="r" style="left:674px;top:2238px;width:2850px;height:34px;background:#F5F5F5;"></div><div class="r" style="left:708px;top:2238px;width:1585px;height:34px;background:#CFCFD3;"></div><svg class="r" style="left:683px;top:2246px;" width="14" height="18" viewBox="0 0 14 18"><path d="M10 1 L3 8.5 L10 16" fill="none" stroke="#6A6A6A" stroke-width="3.2"/></svg><svg class="r" style="left:3465px;top:2246px;" width="14" height="18" viewBox="0 0 14 18"><path d="M4 1 L11 8.5 L4 16" fill="none" stroke="#6A6A6A" stroke-width="3.2"/></svg><div class="r" style="left:674px;top:447px;width:2816px;height:1791px;overflow:hidden"><div class="cd" style="left:35px;top:3.35px"><span class="c">// TestCompany.SafeDownloader, Version=1.0.0.0, Culture=neutral, PublicKeyToken=null</span>
<span class="c">// W</span>
<span class="ug">using</span> 

<span class="ka">internal</span> <span class="mo">static</span> <span class="kt">class</span> <span class="tr">W</span>
{
    [<span class="tr">UnmanagedFunctionPointer</span>(<span class="tv">CallingConvention</span>.<span class="it">StdCall</span>)]
    <span class="ka">private</span> <span class="kt">delegate</span> <span class="vt">bool</span> <span class="tr">IsDebuggerPresentDelegate</span>();

    <span class="ka">private</span> <span class="vt">struct</span> <span class="tv">STARTUPINFO</span>
    

    <span class="ka">private</span> <span class="vt">struct</span> <span class="tv">PROCESS_INFORMATION</span>
    

    <span class="ka">private</span> <span class="vt">struct</span> <span class="tv">UNICODE_STRING</span>
    

    [<span class="tr">UnmanagedFunctionPointer</span>(<span class="tv">CallingConvention</span>.<span class="it">StdCall</span>)]
    <span class="ka">private</span> <span class="kt">delegate</span> <span class="vt">int</span> <span class="tr">NtSetValueKeyDelegate</span>(<span class="tv">IntPtr</span> KeyHandle, <span class="pm">ref</span> <span class="tv">UNICODE_STRING</span> ValueName, <span class="vt">int</span> TitleIndex, <span class="vt">int</span> Type, <span class="tv">IntPtr</span> Data, <span class="vt">int</span> DataSize);

    [<span class="tr">UnmanagedFunctionPointer</span>(<span class="tv">CallingConvention</span>.<span class="it">StdCall</span>)]
    <span class="ka">private</span> <span class="kt">delegate</span> <span class="vt">int</span> <span class="tr">NtDelayExecutionDelegate</span>(<span class="vt">bool</span> Alertable, <span class="pm">ref</span> <span class="vt">long</span> DelayInterval);

    [<span class="tr">UnmanagedFunctionPointer</span>(<span class="tv">CallingConvention</span>.<span class="it">StdCall</span>, <span class="it">CharSet</span> = <span class="tv">CharSet</span>.<span class="it">Unicode</span>)]
    <span class="ka">private</span> <span class="kt">delegate</span> <span class="vt">bool</span> <span class="tr">CreateProcessDelegate</span>(<span class="kt">string</span> lpApplicationName, <span class="kt">string</span> lpCommandLine, <span class="tv">IntPtr</span> lpProcessAttributes, <span class="tv">IntPtr</span> lpThreadAttributes, <span class="vt">bool</span> bInheritHandles, <span class="vt">uint</span> dwCreationFlags, <span class="tv">IntPtr</span> lpEnvironment, <span class="kt">string</span> lpCurrentDirectory, <span class="pm">ref</span> <span class="tv">STARTUPINFO</span> lpStartupInfo, <span class="pm">out</span> <span class="tv">PROCESS_INFORMATION</span> lpProcessInformation);

    [<span class="tr">UnmanagedFunctionPointer</span>(<span class="tv">CallingConvention</span>.<span class="it">StdCall</span>, <span class="it">CharSet</span> = <span class="tv">CharSet</span>.<span class="it">Unicode</span>)]
    <span class="ka">private</span> <span class="kt">delegate</span> <span class="tv">IntPtr</span> <span class="tr">CreateFileDelegate</span>(<span class="kt">string</span> lpFileName, <span class="vt">uint</span> dwDesiredAccess, <span class="vt">uint</span> dwShareMode, <span class="tv">IntPtr</span> lpSecurityAttributes, <span class="vt">uint</span> dwCreationDisposition, <span class="vt">uint</span> dwFlagsAndAttributes, <span class="tv">IntPtr</span> hTemplateFile);

    [<span class="tr">UnmanagedFunctionPointer</span>(<span class="tv">CallingConvention</span>.<span class="it">StdCall</span>)]
    <span class="ka">private</span> <span class="kt">delegate</span> <span class="vt">bool</span> <span class="tr">WriteFileDelegate</span>(<span class="tv">IntPtr</span> hFile, <span class="vt">byte</span>[] lpBuffer, <span class="vt">uint</span> nNumberOfBytesToWrite, <span class="pm">out</span> <span class="vt">uint</span> lpNumberOfBytesWritten, <span class="tv">IntPtr</span> lpOverlapped);

    [<span class="tr">UnmanagedFunctionPointer</span>(<span class="tv">CallingConvention</span>.<span class="it">StdCall</span>)]
    <span class="ka">private</span> <span class="kt">delegate</span> <span class="vt">bool</span> <span class="tr">CloseHandleDelegate</span>(<span class="tv">IntPtr</span> hObject);

    [<span class="tr">UnmanagedFunctionPointer</span>(<span class="tv">CallingConvention</span>.<span class="it">StdCall</span>, <span class="it">CharSet</span> = <span class="tv">CharSet</span>.<span class="it">Unicode</span>)]
    <span class="ka">private</span> <span class="kt">delegate</span> <span class="vt">bool</span> <span class="tr">CreateDirectoryDelegate</span>(<span class="kt">string</span> lpPathName, <span class="tv">IntPtr</span> lpSecurityAttributes);

    [<span class="tr">UnmanagedFunctionPointer</span>(<span class="tv">CallingConvention</span>.<span class="it">StdCall</span>, <span class="it">CharSet</span> = <span class="tv">CharSet</span>.<span class="it">Unicode</span>)]
    <span class="ka">private</span> <span class="kt">delegate</span> <span class="vt">bool</span> <span class="tr">SetFileAttributesDelegate</span>(<span class="kt">string</span> lpFileName, <span class="vt">uint</span> dwFileAttributes);

    [<span class="tr">UnmanagedFunctionPointer</span>(<span class="tv">CallingConvention</span>.<span class="it">StdCall</span>, <span class="it">CharSet</span> = <span class="tv">CharSet</span>.<span class="it">Unicode</span>)]
    <span class="ka">private</span> <span class="kt">delegate</span> <span class="vt">int</span> <span class="tr">RegOpenKeyExDelegate</span>(<span class="vt">int</span> hKey, <span class="kt">string</span> lpSubKey, <span class="vt">int</span> ulOptions, <span class="vt">int</span> samDesired, <span class="pm">ref</span> <span class="tv">IntPtr</span> phkResult);

    [<span class="tr">UnmanagedFunctionPointer</span>(<span class="tv">CallingConvention</span>.<span class="it">StdCall</span>)]
    <span class="ka">private</span> <span class="kt">delegate</span> <span class="vt">int</span> <span class="tr">RegCloseKeyDelegate</span>(<span class="tv">IntPtr</span> hKey);

    [<span class="tr">UnmanagedFunctionPointer</span>(<span class="tv">CallingConvention</span>.<span class="it">StdCall</span>, <span class="it">CharSet</span> = <span class="tv">CharSet</span>.<span class="it">Unicode</span>)]
    <span class="ka">private</span> <span class="kt">delegate</span> <span class="vt">bool</span> <span class="tr">MoveFileDelegate</span>(<span class="kt">string</span> lpExistingFileName, <span class="kt">string</span> lpNewFileName);

    [<span class="tr">UnmanagedFunctionPointer</span>(<span class="tv">CallingConvention</span>.<span class="it">StdCall</span>)]
    <span class="ka">private</span> <span class="kt">delegate</span> <span class="vt">bool</span> <span class="tr">VirtualProtectDelegate</span>(<span class="tv">IntPtr</span> lpAddress, <span class="tv">UIntPtr</span> dwSize, <span class="vt">uint</span> flNewProtect, <span class="pm">out</span> <span class="vt">uint</span> lpflOldProtect);

    <span class="ka">private</span> <span class="mo">static</span> <span class="vt">bool</span> <span class="it">alreadyExecuted</span>;</div><div class="r" style="left:124px;top:64px;width:47px;height:34px;border:2px solid #787878"></div><div class="r" style="left:130.2px;top:85.6px;width:4.8px;height:4.8px;border-radius:50%;background:#808080"></div><div class="r" style="left:145.2px;top:85.6px;width:4.8px;height:4.8px;border-radius:50%;background:#808080"></div><div class="r" style="left:160.2px;top:85.6px;width:4.8px;height:4.8px;border-radius:50%;background:#808080"></div><div class="r" style="left:94px;top:320px;width:47px;height:34px;border:2px solid #787878"></div><div class="r" style="left:100.19999999999999px;top:341.6px;width:4.8px;height:4.8px;border-radius:50%;background:#808080"></div><div class="r" style="left:115.19999999999999px;top:341.6px;width:4.8px;height:4.8px;border-radius:50%;background:#808080"></div><div class="r" style="left:130.2px;top:341.6px;width:4.8px;height:4.8px;border-radius:50%;background:#808080"></div><div class="r" style="left:94px;top:416px;width:47px;height:34px;border:2px solid #787878"></div><div class="r" style="left:100.19999999999999px;top:437.6px;width:4.8px;height:4.8px;border-radius:50%;background:#808080"></div><div class="r" style="left:115.19999999999999px;top:437.6px;width:4.8px;height:4.8px;border-radius:50%;background:#808080"></div><div class="r" style="left:130.2px;top:437.6px;width:4.8px;height:4.8px;border-radius:50%;background:#808080"></div><div class="r" style="left:94px;top:512px;width:47px;height:34px;border:2px solid #787878"></div><div class="r" style="left:100.19999999999999px;top:533.6px;width:4.8px;height:4.8px;border-radius:50%;background:#808080"></div><div class="r" style="left:115.19999999999999px;top:533.6px;width:4.8px;height:4.8px;border-radius:50%;background:#808080"></div><div class="r" style="left:130.2px;top:533.6px;width:4.8px;height:4.8px;border-radius:50%;background:#808080"></div><div class="r" style="left:16px;top:189px;width:2px;height:1791px;background:#C4C4CC;"></div><div class="r" style="left:6px;top:69px;width:24px;height:24px;border:2px solid #CACAD2;background:#fff"></div><div class="r" style="left:10px;top:80px;width:16px;height:2px;background:#333333;"></div><div class="r" style="left:17px;top:73px;width:2px;height:16px;background:#333333;"></div><div class="r" style="left:6px;top:165px;width:24px;height:24px;border:2px solid #CACAD2;background:#fff"></div><div class="r" style="left:10px;top:176px;width:16px;height:2px;background:#333333;"></div><div class="r" style="left:6px;top:325px;width:24px;height:24px;border:2px solid #CACAD2;background:#fff"></div><div class="r" style="left:10px;top:336px;width:16px;height:2px;background:#333333;"></div><div class="r" style="left:17px;top:329px;width:2px;height:16px;background:#333333;"></div><div class="r" style="left:6px;top:421px;width:24px;height:24px;border:2px solid #CACAD2;background:#fff"></div><div class="r" style="left:10px;top:432px;width:16px;height:2px;background:#333333;"></div><div class="r" style="left:17px;top:425px;width:2px;height:16px;background:#333333;"></div><div class="r" style="left:6px;top:517px;width:24px;height:24px;border:2px solid #CACAD2;background:#fff"></div><div class="r" style="left:10px;top:528px;width:16px;height:2px;background:#333333;"></div><div class="r" style="left:17px;top:521px;width:2px;height:16px;background:#333333;"></div></div><div class="r" style="left:46px;top:38px;width:1px;height:2250px;background:rgba(255,255,255,0.9);"></div><div class="r" style="left:3537px;top:38px;width:1px;height:2250px;background:rgba(255,255,255,0.9);"></div><div class="r" style="left:46px;top:2287px;width:3492px;height:1px;background:rgba(255,255,255,0.9);"></div><div class="r" style="left:46px;top:38px;width:3492px;height:1px;background:rgba(255,255,255,0.9);"></div></body></html>
